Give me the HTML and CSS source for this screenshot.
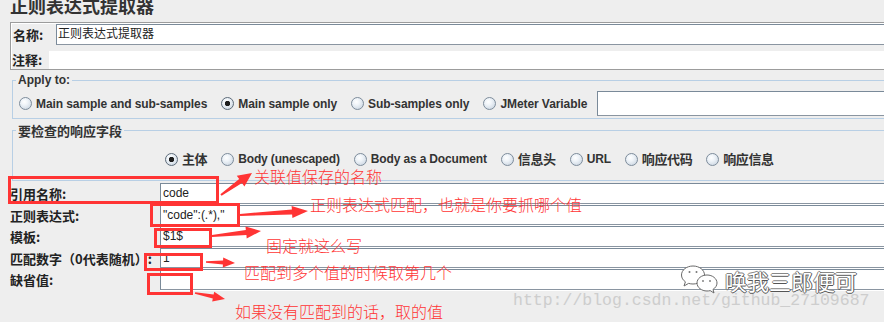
FILE: index.html
```html
<!DOCTYPE html>
<html lang="zh-CN">
<head>
<meta charset="UTF-8" />
<title>正则表达式提取器</title>
<link rel="stylesheet" href="styles.css">
</head>
<body>
<div class="page">

  <h1 class="title">正则表达式提取器</h1>

  <div class="name-box">
    <div class="name-row">
      <span class="label name-label">名称:</span>
      <div class="field name-field">正则表达式提取器</div>
    </div>
    <div class="name-row comment-row">
      <span class="label comment-label">注释:</span>
      <div class="comment-field"></div>
    </div>
  </div>

  <fieldset class="group apply-group">
    <legend>Apply to:</legend>
    <div class="radios">
      <span class="option"><i class="radio"></i>Main sample and sub-samples</span>
      <span class="option"><i class="radio on"></i>Main sample only</span>
      <span class="option"><i class="radio"></i>Sub-samples only</span>
      <span class="option"><i class="radio"></i>JMeter Variable</span>
      <div class="field var-field"></div>
    </div>
  </fieldset>

  <fieldset class="group check-group">
    <legend class="zh">要检查的响应字段</legend>
    <div class="radios">
      <span class="option zh"><i class="radio on"></i>主体</span>
      <span class="option"><i class="radio"></i>Body (unescaped)</span>
      <span class="option"><i class="radio"></i>Body as a Document</span>
      <span class="option zh"><i class="radio"></i>信息头</span>
      <span class="option"><i class="radio"></i>URL</span>
      <span class="option zh"><i class="radio"></i>响应代码</span>
      <span class="option zh"><i class="radio"></i>响应信息</span>
    </div>
  </fieldset>

  <div class="form">
    <div class="form-row"><span class="label">引用名称:</span><div class="field">code</div></div>
    <div class="form-row"><span class="label">正则表达式:</span><div class="field">"code":(.*),"</div></div>
    <div class="form-row"><span class="label">模板:</span><div class="field">$1$</div></div>
    <div class="form-row"><span class="label">匹配数字（0代表随机）:</span><div class="field">1</div></div>
    <div class="form-row"><span class="label">缺省值:</span><div class="field"></div></div>
  </div>

  <!-- red annotations drawn over the form -->
  <div class="mark mark-ref"></div>
  <div class="mark mark-regex"></div>
  <div class="mark mark-tpl"></div>
  <div class="mark mark-num"></div>
  <div class="mark mark-def"></div>

  <svg class="arrows" width="884" height="322" viewBox="0 0 884 322">
    <polygon points="221.6,195.8 242,183.1 244.4,186.4 252,173 236.8,175.8 239.2,179.1 220.4,194.2"/>
    <polygon points="240.1,216 292.1,214.4 292.4,217.9 308,211 291.6,205.9 291.9,209.4 239.9,214"/>
    <polygon points="212.1,237 246.4,235 246.7,238.5 261,231 245.5,226.5 245.8,230 211.9,235"/>
    <polygon points="206,262.8 222.9,264.6 222.8,267.6 235,263 223.2,257.6 223.1,260.6 206,261.2"/>
    <polygon points="194.8,293.8 212.8,298.6 212.2,301.5 225,299 214.2,291.7 213.6,294.6 195.2,292.2"/>
  </svg>

  <span class="note note-ref">关联值保存的名称</span>
  <span class="note note-regex">正则表达式匹配，也就是你要抓哪个值</span>
  <span class="note note-tpl">固定就这么写</span>
  <span class="note note-num">匹配到多个值的时候取第几个</span>
  <span class="note note-def">如果没有匹配到的话，取的值</span>

  <span class="watermark">http://blog.csdn.net/github_27109687</span>

  <div class="wechat">
    <svg width="40" height="30" viewBox="0 0 40 30">
      <path d="M13 2C6.6 2 1.5 6 1.5 11c0 2.8 1.5 5.2 3.9 6.8L4 22l4.6-2.6c1.4.4 2.9.6 4.4.6 6.4 0 11.5-4 11.5-9S19.4 2 13 2z"/>
      <circle class="eye" cx="9.5" cy="8" r="1"/>
      <circle class="eye" cx="16.5" cy="8" r="1"/>
      <path d="M27 11c-5.5 0-10 3.6-10 8s4.5 8 10 8c1.1 0 2.2-.1 3.2-.4L34 29l-1-3.6c2.4-1.5 4-3.8 4-6.4 0-4.4-4.5-8-10-8z"/>
      <circle class="eye" cx="23" cy="17" r="0.9"/>
      <circle class="eye" cx="30" cy="17" r="0.9"/>
    </svg>
    <span>唤我三郎便可</span>
  </div>

</div>
</body>
</html>
```

FILE: styles.css
```css
html, body {
  margin: 0;
  background: #eeeeee;
  overflow: hidden;
}

.page {
  position: relative;
  width: 884px;
  height: 322px;
  overflow: hidden;
  font-family: "Liberation Sans", "Noto Sans CJK SC", sans-serif;
  font-size: 12px;
  color: #222;
}

.title {
  margin: -4px 0 0 10px;
  font: bold 18px/18px "Noto Sans CJK SC", sans-serif;
  color: #333;
}

.label {
  flex: none;
  font: bold 13px "Noto Sans CJK SC", sans-serif;
  color: #222;
  white-space: nowrap;
}

.field {
  background: #fff;
  border-top: 1px solid #7a8a99;
  border-left: 1px solid #7a8a99;
  border-bottom: 1px solid #8a95a1;
  box-sizing: border-box;
  padding-left: 1px;
  white-space: nowrap;
}

/* name / comment box */

.name-box {
  margin: 8px -20px 0 10px;
  padding: 1px 0 0 2px;
  border: 1px solid #9c9c9c;
  box-shadow: inset 1px 1px 0 #fff;
}

.name-row {
  display: flex;
  height: 21px;
  line-height: 19px;
}

.name-label {
  width: 43px;
  line-height: 21px;
}

.name-field {
  flex: 1;
  font-family: "Liberation Sans", "Noto Sans CJK SC", sans-serif;
  font-size: 12px;
}

.comment-row {
  height: 18px;
  margin-top: 6px;
}

.comment-label {
  width: 37px;
  margin-left: -1px;
  line-height: 18px;
}

.comment-field {
  flex: 1;
  background: #fff;
}

/* titled groups */

.group {
  margin: 0 -20px 0 12px;
  padding: 0;
  border: 1px solid #b8cfe5;
  min-width: 0;
}

.group legend {
  margin-left: 3px;
  padding: 0 2px;
  font-weight: bold;
  line-height: 15px;
  color: #333;
}

.group legend.zh {
  font: bold 13px/15px "Noto Sans CJK SC", sans-serif;
}

.apply-group {
  margin-top: 3px;
}

.check-group {
  margin-top: 4px;
}

.radios {
  display: flex;
  align-items: center;
  column-gap: 14px;
}

.apply-group .radios {
  height: 25px;
  padding: 3px 0 2px 6px;
}

.check-group .radios {
  height: 16px;
  padding: 13px 0 13px 152px;
}

.option {
  display: flex;
  align-items: center;
  gap: 4px;
  font-weight: bold;
  line-height: 16px;
  letter-spacing: -0.15px;
  color: #333;
  white-space: nowrap;
}

.apply-group .option {
  letter-spacing: -0.08px;
}

.option.zh {
  font: bold 13px/16px "Noto Sans CJK SC", sans-serif;
  letter-spacing: -0.4px;
}

.radio {
  flex: none;
  width: 13px;
  height: 13px;
  box-sizing: border-box;
  border: 1px solid #7d8c9b;
  border-radius: 50%;
  background: radial-gradient(circle at 40% 35%, #fff 0, #eef3f8 35%, #c2cedb 100%);
}

.radio.on {
  border-color: #5d6b79;
  background:
    radial-gradient(circle, #1e1e1e 0 2.4px, transparent 3px),
    radial-gradient(circle at 40% 35%, #fff 0, #eef3f8 35%, #c2cedb 100%);
}

.var-field {
  flex: 1;
  height: 25px;
  margin-left: -4px;
}

/* extractor form */

.form {
  margin: 2px 0 0 10px;
}

.form-row {
  display: flex;
  height: 22px;
}

.form-row:nth-child(even) {
  height: 21px;
}

.form-row .label {
  width: 150px;
  line-height: 21px;
}

.form-row .field {
  flex: 1;
  height: calc(100% - 1px);
  line-height: 19px;
  padding-left: 2px;
  box-shadow: 0 1px 0 #fff;
}

/* annotations */

.mark {
  position: absolute;
  box-sizing: border-box;
  border: 3px solid #ff3434;
}

.mark-ref   { left: 8px;   top: 176px; width: 211px; height: 28px; }
.mark-regex { left: 150px; top: 203px; width: 90px;  height: 24px; }
.mark-tpl   { left: 154px; top: 228px; width: 58px;  height: 20px; }
.mark-num   { left: 144px; top: 253px; width: 59px;  height: 18px; }
.mark-def   { left: 147px; top: 273px; width: 46px;  height: 22px; }

.arrows {
  position: absolute;
  left: 0;
  top: 0;
  fill: #ff3434;
}

.note {
  position: absolute;
  font: 300 16px/16px "Noto Sans CJK SC", sans-serif;
  color: #ff3434;
  white-space: nowrap;
}

.note-ref   { left: 254px; top: 168px; }
.note-regex { left: 310px; top: 196px; }
.note-tpl   { left: 266px; top: 237px; }
.note-num   { left: 244px; top: 264px; }
.note-def   { left: 235px; top: 303px; }

.watermark {
  position: absolute;
  left: 513px;
  top: 292px;
  font: 16.5px/17px "Liberation Mono", monospace;
  color: #cdcdcd;
  white-space: nowrap;
}

.wechat {
  position: absolute;
  left: 680px;
  top: 264px;
  display: flex;
  align-items: flex-start;
  gap: 5px;
}

.wechat svg {
  fill: #fff;
  stroke: #6a6a6a;
  stroke-width: 1;
}

.wechat .eye {
  fill: #777;
  stroke: none;
}

.wechat span {
  margin-top: 5px;
  font: 22px/22px "Noto Sans CJK SC", sans-serif;
  color: #fff;
  text-shadow: 1px 0 0 #555, 0 1px 0 #555, -1px 0 0 #888, 0 -1px 0 #888;
  white-space: nowrap;
}
```
